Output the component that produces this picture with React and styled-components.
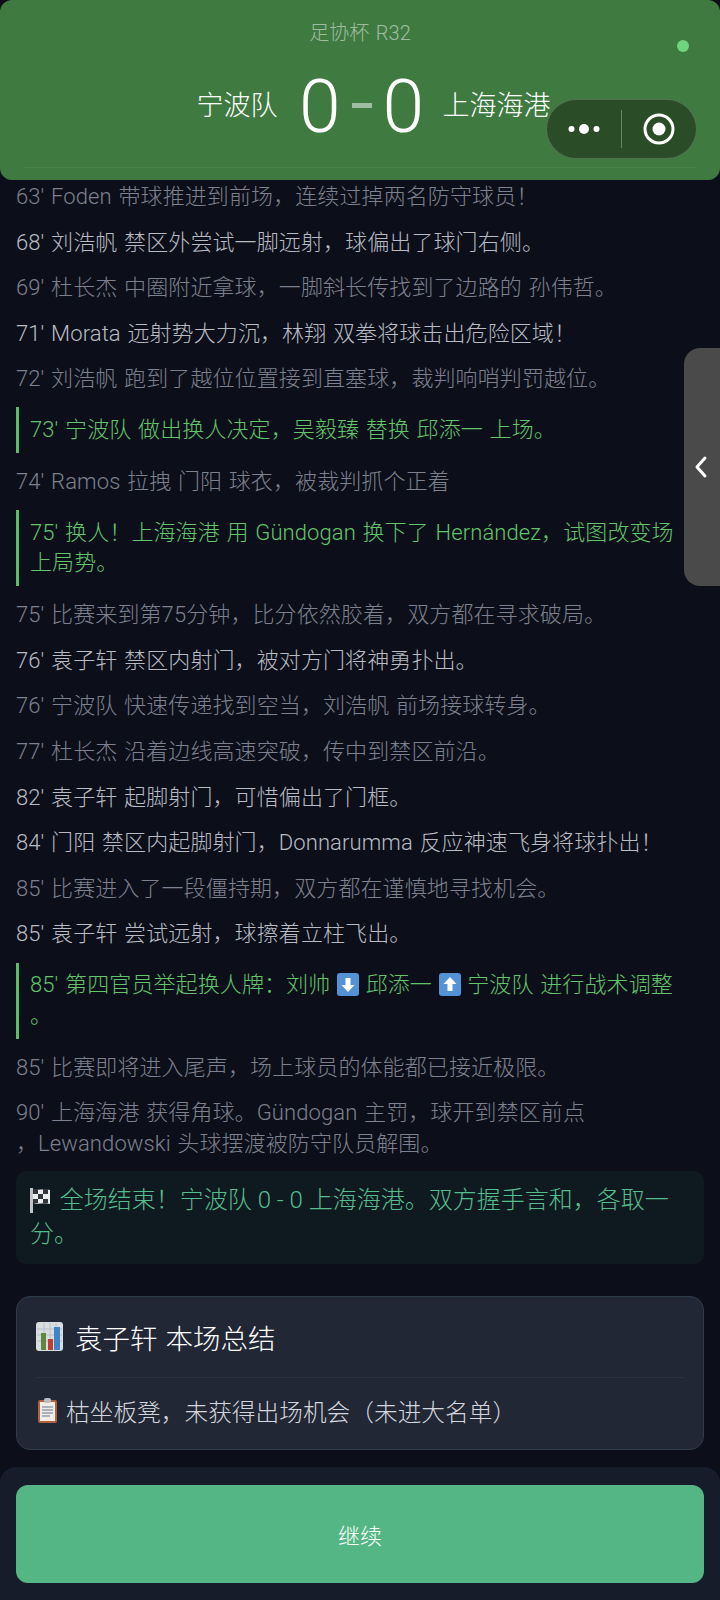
import React from 'react';
import styled, { createGlobalStyle } from 'styled-components';

const Global = createGlobalStyle`
    html, body {
        margin: 0;
        padding: 0;
        background: #0c0f1a;
    }
    * {
        box-sizing: border-box;
    }
`

const Page = styled.div`
    position: relative;
    width: 720px;
    height: 1600px;
    overflow: hidden;
    display: flex;
    flex-direction: column;
    background: #0c0f1a;
    font-family: Roboto, "Noto Sans CJK SC", sans-serif;
    font-weight: 300;
    letter-spacing: 0.1px;
    word-spacing: 1.2px;
`

const Header = styled.header`
    flex: none;
    height: 180px;
    padding: 20px 24px 12px;
    background: #3f7a41;
    border-radius: 12px;
    display: flex;
    flex-direction: column;
    align-items: center;
    position: relative;
`

const League = styled.div`
    font-size: 20px;
    line-height: 27px;
    color: rgba(255, 255, 255, 0.5);
`

const ScoreRow = styled.div`
    flex: 1;
    width: 100%;
    display: grid;
    grid-template-columns: 1fr auto 1fr;
    align-items: center;
    column-gap: 18.5px;
    border-bottom: 1px solid rgba(255, 255, 255, 0.05);
`

const Team = styled.div`
    font-size: 27px;
    line-height: 36px;
    letter-spacing: 0;
    color: #fff;
    text-align: ${p => p.$side};
    padding-bottom: 3px;
`

const Score = styled.div`
    display: flex;
    align-items: center;
    gap: 11px;
    margin-left: 3px;
    padding-bottom: 3px;
    font-size: 75px;
    font-weight: 350;
    line-height: 88px;
    letter-spacing: 0;
    color: #fff;
`

const Dash = styled.span`
    width: 20px;
    height: 5px;
    background: rgba(255, 255, 255, 0.5);
`

const LiveDot = styled.span`
    position: absolute;
    top: 40px;
    right: 31px;
    width: 12px;
    height: 12px;
    border-radius: 50%;
    background: #6fd47e;
`

const Capsule = styled.div`
    position: absolute;
    top: 99px;
    left: 546px;
    width: 151px;
    height: 60px;
    border-radius: 30px;
    background: #2a4d27;
    border: 1.5px solid rgba(255, 255, 255, 0.2);
    display: flex;
    align-items: center;
`

const CapsuleHalf = styled.div`
    flex: 1;
    height: 100%;
    display: flex;
    align-items: center;
    justify-content: center;
`

const CapsuleLine = styled.span`
    width: 1px;
    height: 38px;
    background: rgba(255, 255, 255, 0.3);
`

const SideTab = styled.div`
    position: absolute;
    top: 348px;
    left: 684px;
    width: 36px;
    height: 238px;
    border-radius: 16px 0 0 16px;
    background: #4a4a4a;
    display: flex;
    align-items: center;
    justify-content: center;
    padding-right: 3px;
`

const Feed = styled.main`
    flex: 1;
    min-height: 0;
    padding: 1px 16px 0;
    display: flex;
    flex-direction: column;
    gap: 14.6px;
`

const Line = styled.p`
    margin: 0;
    font-size: 22px;
    line-height: 31px;
    color: ${p => (p.$bright ? '#b8bbc3' : '#7d808e')};
`

const SubLine = styled.p`
    margin: -1.5px 0;
    padding: 7.5px 0 7.5px 11px;
    border-left: 3px solid #5cbd64;
    font-size: 22px;
    line-height: 30.5px;
    color: #62c46a;
`

const FinalBox = styled.div`
    margin-top: -2.6px;
    padding: 13px 14px;
    border-radius: 10px;
    background: #0f1a20;
    font-size: 24px;
    line-height: 33.6px;
    letter-spacing: 0;
    word-spacing: 0;
    color: #55bd8c;
`

const Summary = styled.section`
    margin-top: 16.7px;
    height: 154px;
    padding: 0 19px;
    border-radius: 14px;
    background: #222736;
    border: 1px solid #2e3b48;
`

const SummaryTitle = styled.div`
    height: 81px;
    display: flex;
    align-items: center;
    gap: 12px;
    font-size: 27.5px;
    letter-spacing: 0;
    color: #fff;
    border-bottom: 1px solid #2b3140;
`

const SummaryText = styled.div`
    height: 71px;
    padding: 0 0 5px 2px;
    display: flex;
    align-items: center;
    gap: 9px;
    font-size: 23.7px;
    letter-spacing: 0;
    color: #d3d6dc;
`

const Footer = styled.footer`
    flex: none;
    height: 133px;
    padding: 18px 16px 17px;
    background: #171c2b;
    border-radius: 16px 16px 0 0;
`

const ContinueButton = styled.button`
    display: block;
    width: 100%;
    height: 98px;
    border: 0;
    border-radius: 12px;
    background: #53b684;
    color: #fff;
    font: inherit;
    font-size: 22px;
`

const Emoji = styled.svg`
    display: inline-block;
    vertical-align: ${p => p.$align || '-4px'};
    margin-right: ${p => p.$gap || '0'};
`

const ArrowEmoji = ({ up }) => (
    <Emoji width="22" height="23" viewBox="0 0 22 23">
        <rect width="22" height="23" rx="3" fill="#5492d6" />
        <path d={up ? 'M11 4 17.500 11h-4v7h-5v-7h-4z' : 'M11 19 17.500 12h-4V5h-5v7h-4z'} fill="#fff" />
    </Emoji>
)

const FlagEmoji = () => (
    <Emoji width="20" height="25" viewBox="0 0 20 25" $align="-5px" $gap="4px">
        <rect x="0" y="0" width="3" height="25" fill="#bfc3c8" />
        <path d="M3 1c6 2 10-1 17 1v14c-7-2-11 1-17-1z" fill="#eceded" />
        <path d="M3 1h5v5H3zM13 1h5v5h-5zM8 6h5v5H8zM3 11h5v4H3zM13 11h5v4h-5z" fill="#33363d" />
    </Emoji>
)

const ChartEmoji = () => (
    <svg width="27" height="29" viewBox="0 0 27 29">
        <rect width="27" height="29" rx="3" fill="#d8dde2" />
        <path d="M1 7h25M1 13h25M1 19h25M8 1v27M14 1v27M20 1v27" stroke="#b9c0c7" strokeWidth="1" />
        <rect x="5" y="11" width="5" height="17" fill="#5d8a3c" />
        <rect x="12" y="17" width="5" height="11" fill="#c23b34" />
        <rect x="18" y="5" width="6" height="23" fill="#3d85c6" />
    </svg>
)

const ClipboardEmoji = () => (
    <svg width="19" height="25" viewBox="0 0 19 25" style={{ flex: 'none' }}>
        <rect y="2" width="19" height="23" rx="2" fill="#b0623f" />
        <rect x="2" y="4" width="15" height="19" fill="#f1ece6" />
        <rect x="6" y="0" width="7" height="5" rx="2" fill="#b8bec6" />
        <path d="M4 9h11M4 12h11M4 15h11M4 18h8" stroke="#8ea0b2" strokeWidth="1.3" />
    </svg>
)

const events = [
    { text: "63' Foden 带球推进到前场，连续过掉两名防守球员！" },
    { text: "68' 刘浩帆 禁区外尝试一脚远射，球偏出了球门右侧。", bright: true },
    { text: "69' 杜长杰 中圈附近拿球，一脚斜长传找到了边路的 孙伟哲。" },
    { text: "71' Morata 远射势大力沉，林翔 双拳将球击出危险区域！", bright: true },
    { text: "72' 刘浩帆 跑到了越位位置接到直塞球，裁判响哨判罚越位。" },
    { text: "73' 宁波队 做出换人决定，吴毅臻 替换 邱添一 上场。", sub: true },
    { text: "74' Ramos 拉拽 门阳 球衣，被裁判抓个正着" },
    { text: <>75' 换人！上海海港 用 Gündogan 换下了 Hernández，试图改变场<br />上局势。</>, sub: true },
    { text: "75' 比赛来到第75分钟，比分依然胶着，双方都在寻求破局。" },
    { text: "76' 袁子轩 禁区内射门，被对方门将神勇扑出。", bright: true },
    { text: "76' 宁波队 快速传递找到空当，刘浩帆 前场接球转身。" },
    { text: "77' 杜长杰 沿着边线高速突破，传中到禁区前沿。" },
    { text: "82' 袁子轩 起脚射门，可惜偏出了门框。", bright: true },
    { text: "84' 门阳 禁区内起脚射门，Donnarumma 反应神速飞身将球扑出！", bright: true },
    { text: "85' 比赛进入了一段僵持期，双方都在谨慎地寻找机会。" },
    { text: "85' 袁子轩 尝试远射，球擦着立柱飞出。", bright: true },
]

const App = () => (
    <Page>
        <Global />
        <Header>
            <League>足协杯 R32</League>
            <ScoreRow>
                <Team $side="right">宁波队</Team>
                <Score>0<Dash />0</Score>
                <Team $side="left">上海海港</Team>
            </ScoreRow>
            <LiveDot />
        </Header>
        <Capsule>
            <CapsuleHalf>
                <svg width="32" height="12" viewBox="0 0 32 12">
                    <circle cx="3.500" cy="6" r="3" fill="#fff" />
                    <circle cx="16" cy="6" r="5" fill="#fff" />
                    <circle cx="28.500" cy="6" r="3" fill="#fff" />
                </svg>
            </CapsuleHalf>
            <CapsuleLine />
            <CapsuleHalf>
                <svg width="32" height="32" viewBox="0 0 32 32">
                    <circle cx="16" cy="16" r="14" fill="none" stroke="#fff" strokeWidth="3" />
                    <circle cx="16" cy="16" r="6.500" fill="#fff" />
                </svg>
            </CapsuleHalf>
        </Capsule>
        <Feed>
            {events.map((e, i) => (
                e.sub
                    ? <SubLine key={i}>{e.text}</SubLine>
                    : <Line key={i} $bright={e.bright}>{e.text}</Line>
            ))}
            <SubLine>85' 第四官员举起换人牌：刘帅 <ArrowEmoji /> 邱添一 <ArrowEmoji up /> 宁波队 进行战术调整<br />。</SubLine>
            <Line>85' 比赛即将进入尾声，场上球员的体能都已接近极限。</Line>
            <Line>90' 上海海港 获得角球。Gündogan 主罚，球开到禁区前点<br />，Lewandowski 头球摆渡被防守队员解围。</Line>
            <FinalBox><FlagEmoji /> 全场结束！宁波队 0 - 0 上海海港。双方握手言和，各取一分。</FinalBox>
            <Summary>
                <SummaryTitle><ChartEmoji />袁子轩 本场总结</SummaryTitle>
                <SummaryText><ClipboardEmoji />枯坐板凳，未获得出场机会（未进大名单）</SummaryText>
            </Summary>
        </Feed>
        <Footer>
            <ContinueButton>继续</ContinueButton>
        </Footer>
        <SideTab>
            <svg width="16" height="24" viewBox="0 0 16 24">
                <path d="M12 3 4 12l8 9" fill="none" stroke="#fff" strokeWidth="3" strokeLinecap="round" strokeLinejoin="round" />
            </svg>
        </SideTab>
    </Page>
)

export default App
